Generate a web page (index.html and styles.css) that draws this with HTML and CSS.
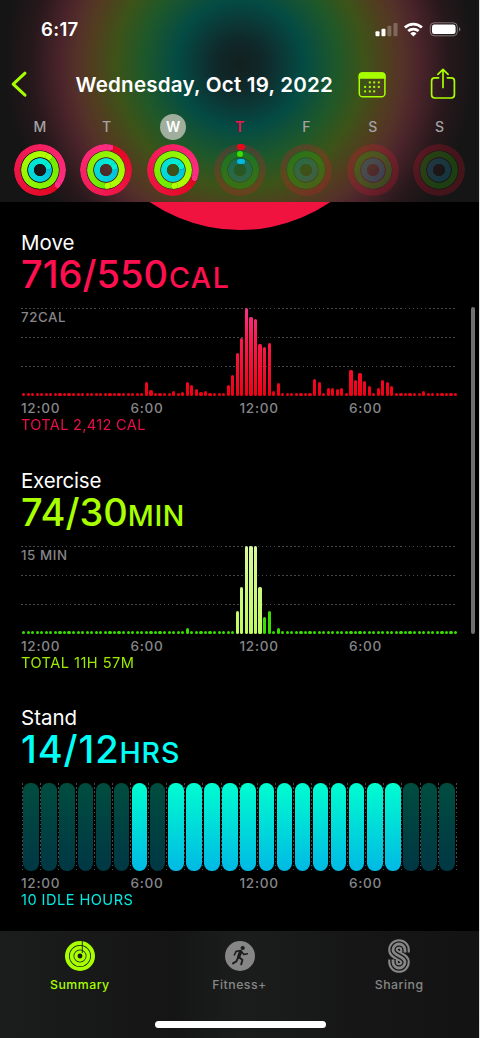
FILE: index.html
```html
<!DOCTYPE html>
<html lang="en">
<head>
  <meta charset="UTF-8">
  <meta name="viewport" content="width=device-width, initial-scale=1.0">
  <title>Activity</title>
  <link rel="stylesheet" href="styles.css">
</head>
<body>
<div class="phone">
  <header class="header">
    <!-- status bar -->
    <div class="status">
      <span class="time">6:17</span>
      <svg class="status-icons" width="88" height="18" viewBox="0 0 88 18">
        <g fill="#fff">
          <rect x="2.5" y="11.3" width="4" height="5" rx="1"/>
          <rect x="8.5" y="8.8" width="4" height="7.5" rx="1"/>
          <rect x="14.4" y="5.8" width="4" height="10.5" rx="1" opacity=".25"/>
          <rect x="20.5" y="3" width="4" height="13.3" rx="1" opacity=".25"/>
        </g>
        <g fill="none" stroke="#fff" stroke-width="2.7">
          <path d="M31.9 7.5a12.2 12.2 0 0 1 17 0"/>
          <path d="M35.2 11.1a7.6 7.6 0 0 1 10.4 0"/>
        </g>
        <path d="M37.3 13.4a4.6 4.6 0 0 1 6.2 0L40.4 16.5z" fill="#fff"/>
        <rect x="57.3" y="2.8" width="27" height="13" rx="4" fill="none" stroke="#fff" stroke-opacity=".4"/>
        <rect x="59" y="4.5" width="23.6" height="9.6" rx="2.4" fill="#fff"/>
        <path d="M86 7.2a2.4 2.4 0 0 1 0 4.3z" fill="#fff" opacity=".45"/>
      </svg>
    </div>

    <!-- title bar -->
    <div class="nav">
      <svg class="back" width="18" height="28" viewBox="0 0 18 28">
        <path d="M15 3.2L3.2 14.2l11.800 11" fill="none" stroke="#a8ff00" stroke-width="3" stroke-linecap="round" stroke-linejoin="round"/>
      </svg>
      <h1>Wednesday, Oct 19, 2022</h1>
      <svg class="cal" width="28" height="26" viewBox="0 0 28 26">
        <rect x="1.3" y="1" width="25.6" height="23.8" rx="3.4" fill="none" stroke="#a8ff00" stroke-width="1.5"/>
        <path d="M.6 6.8V4A3.6 3.6 0 0 1 4.2.3H24A3.6 3.6 0 0 1 27.6 4v2.8z" fill="#a8ff00"/>
        <g fill="#a8ff00">
          <rect x="10.8" y="9.4" width="2" height="2"/><rect x="15.2" y="9.4" width="2" height="2"/><rect x="19.8" y="9.4" width="2" height="2"/>
          <rect x="6.1" y="13.9" width="2" height="2"/><rect x="10.8" y="13.9" width="2" height="2"/><rect x="15.2" y="13.9" width="2" height="2"/><rect x="19.8" y="13.9" width="2" height="2"/>
          <rect x="6.1" y="18.4" width="2" height="2"/><rect x="10.8" y="18.4" width="2" height="2"/><rect x="15.2" y="18.4" width="2" height="2"/>
        </g>
      </svg>
      <svg class="share" width="26" height="32" viewBox="0 0 26 32">
        <g fill="none" stroke="#a8ff00" stroke-width="1.7" stroke-linecap="round" stroke-linejoin="round">
          <path d="M8.6 9.8H4.8A3.2 3.2 0 0 0 1.6 13v13.8A3.2 3.2 0 0 0 4.8 30h16.400a3.2 3.2 0 0 0 3.2-3.2V13a3.2 3.2 0 0 0-3.2-3.2h-3.800"/>
          <path d="M13 19.5V1.6M7.9 6.4L13 1.4l5.1 5"/>
        </g>
      </svg>
    </div>

    <!-- week -->
    <ul class="week"></ul>
  </header>

  <main class="content">
    <div class="big-ring"></div>

    <section class="move">
      <h2>Move</h2>
      <p class="value">716/550<small>CAL</small></p>
      <div class="chart lines" id="move"><span class="max">72CAL</span></div>
      <div class="axis"><span>12:00</span><span>6:00</span><span>12:00</span><span>6:00</span></div>
      <p class="total">TOTAL 2,412 CAL</p>
    </section>

    <section class="exercise">
      <h2>Exercise</h2>
      <p class="value">74/30<small>MIN</small></p>
      <div class="chart lines" id="exercise"><span class="max">15 MIN</span></div>
      <div class="axis"><span>12:00</span><span>6:00</span><span>12:00</span><span>6:00</span></div>
      <p class="total">TOTAL 11H 57M</p>
    </section>

    <section class="stand">
      <h2>Stand</h2>
      <p class="value">14/12<small>HRS</small></p>
      <div class="chart hours" id="stand"></div>
      <div class="axis"><span>12:00</span><span>6:00</span><span>12:00</span><span>6:00</span></div>
      <p class="total">10 IDLE HOURS</p>
    </section>

    <div class="scrollbar"></div>
  </main>

  <!-- tab bar -->
  <nav class="tabs">
    <a class="on">
      <svg width="30" height="34" viewBox="0 0 30 34">
        <g fill="none" stroke="#a8ff00">
          <circle cx="15" cy="17" r="13" stroke-width="4"/>
          <circle cx="15" cy="17" r="8.4" stroke-width="3.8"/>
          <circle cx="15" cy="17" r="4.1" stroke-width="3.3"/>
        </g>
        <path d="M17.3 2v12" stroke="#1b1c1c" stroke-width=".9"/>
      </svg>
      <span>Summary</span>
    </a>
    <a>
      <svg width="30" height="34" viewBox="0 0 30 34">
        <circle cx="15" cy="17" r="15" fill="#868686"/>
        <circle cx="17.7" cy="9" r="2.1" fill="#1b1c1c"/>
        <g fill="none" stroke="#1b1c1c" stroke-linecap="round" stroke-linejoin="round">
          <path d="M15.6 12.6l-2 5.6" stroke-width="3.4"/>
          <path d="M14.8 11.8l-3.7.6-1.7 3.6M16.8 13l2.1 2.6 3.4-.9" stroke-width="1.6"/>
          <path d="M14.2 18.4l3.2 2.4-1.2 4.6M13 18.6l-1.5 3.6-3.5 2.2" stroke-width="1.9"/>
        </g>
      </svg>
      <span>Fitness+</span>
    </a>
    <a>
      <svg width="24" height="34" viewBox="0 0 24 34">
        <g fill="none">
          <path d="M18 13.5V11a6 6 0 0 0-12 0C6 17 18 17 18 23a6 6 0 0 1-12 0v-2.500" stroke="#868686" stroke-width="9.600"/>
          <path d="M18 14V11a6 6 0 0 0-12 0C6 17 18 17 18 23a6 6 0 0 1-12 0v-3" stroke="#171717" stroke-width="5.400"/>
          <path d="M18 13.5V11a6 6 0 0 0-12 0C6 17 18 17 18 23a6 6 0 0 1-12 0v-2.500" stroke="#868686" stroke-width="2.800"/>
        </g>
      </svg>
      <span>Sharing</span>
    </a>
    <div class="home"></div>
  </nav>
</div>

<script>
  // week rings: angle where each ring ends (move, exercise, stand)
  const days = [
    { name: 'M', ends: [130, 34, 65] },
    { name: 'T', ends: [11, 175, 68] },
    { name: 'W', ends: [110, 175, 65], cls: 'selected' },
    { name: 'T', cls: 'today' },
    { name: 'F' },
    { name: 'S' },
    { name: 'S' }
  ];
  const kinds = ['r-move', 'r-exercise', 'r-stand'];

  document.querySelector('.week').innerHTML = days.map(day => {
    const rings = kinds.map((kind, i) => day.ends
      ? `<i class="ring ${kind}" style="--end:${day.ends[i]}deg"></i>`
      : `<i class="ring empty ${kind}"></i>`).join('');
    const start = day.cls === 'today' ? '<b class="s1"></b><b class="s2"></b><b class="s3"></b>' : '';
    return `<li class="${day.cls || ''}"><span>${day.name}</span><div class="rings">${rings}${start}</div></li>`;
  }).join('');

  // quarter hour bars, heights in px, 3 = nothing
  const bars = (id, values) => {
    const chart = document.getElementById(id);
    for (let i = 0; i < 96; i++) {
      const h = values[i] || 3;
      const bar = document.createElement('i');
      bar.style.height = h + 'px';
      if (id === 'exercise' && i >= 47 && i <= 52) bar.className = 'hot';
      chart.appendChild(bar);
    }
  };

  bars('move', {
    27: 14, 28: 6, 33: 5, 35: 4, 36: 14, 37: 11, 38: 7, 39: 4, 40: 5,
    45: 11, 46: 21, 47: 43, 48: 58, 49: 88, 50: 79, 51: 77, 52: 52, 53: 49, 54: 53, 55: 5, 56: 13,
    64: 17, 65: 14, 67: 8, 68: 8, 69: 7, 70: 8,
    72: 26, 73: 16, 74: 23, 75: 15, 76: 10, 78: 8, 79: 16, 80: 14, 81: 10, 88: 5
  });
  bars('exercise', { 36: 6, 47: 23, 48: 47, 49: 88, 50: 88, 51: 88, 52: 47, 53: 17, 54: 23, 56: 6 });

  // stand hours
  const stood = '000000101111111111111000';
  document.getElementById('stand').innerHTML =
    [...stood].map(h => `<i class="${h === '1' ? 'on' : ''}"></i>`).join('');
</script>
</body>
</html>
```
FILE: styles.css
```css
* {
  margin: 0;
  padding: 0;
  box-sizing: border-box;
}
ul, li {
  list-style: none;
}
svg {
  display: block;
}
body {
  background: #dedede;
  font-family: Inter, "Liberation Sans", sans-serif;
  color: #fff;
}
.phone {
  display: flex;
  flex-direction: column;
  width: 479px;
  height: 1038px;
  background: #000;
  overflow: hidden;
}

/* header */
.header {
  height: 202px;
  background: radial-gradient(circle at 240px 64px, #13201f 0, #10282a 24px, #044b44 64px, #1f5829 98px, #3d5318 124px, #523c20 150px, #54302a 165px, #4a242a 180px, #27181b 208px, #161516 234px);
}
.status {
  display: flex;
  justify-content: space-between;
  height: 60px;
  padding: 19px 18px 0 41px;
}
.time {
  font-size: 18.6px;
  font-weight: 600;
  line-height: 21px;
  letter-spacing: .3px;
}
.status-icons {
  margin-top: 1px;
}
.nav {
  display: flex;
  height: 52px;
  padding-left: 10px;
}
.back {
  margin-top: 10px;
}
.nav h1 {
  width: 283px;
  padding-left: 47.5px;
  font-size: 20.6px;
  font-weight: 600;
  line-height: 49px;
  letter-spacing: .2px;
  white-space: nowrap;
}
.cal {
  margin: 12px 0 0 47px;
}
.share {
  margin: 8px 0 0 44px;
}

/* week */
.week {
  display: flex;
  padding-left: 6.6px;
}
.week li {
  display: flex;
  flex-direction: column;
  align-items: center;
  width: 66.6px;
}
.week span {
  width: 26px;
  height: 26px;
  margin-top: 2px;
  border-radius: 50%;
  color: #a3a3a5;
  font-size: 14px;
  font-weight: 500;
  line-height: 26px;
  text-align: center;
}
.week .selected span {
  background: #9fae9d;
  color: #fff;
  font-weight: 600;
}
.week .today span {
  color: #f0144a;
  font-weight: 600;
}
.rings {
  position: relative;
  width: 52px;
  height: 52px;
  margin-top: 4px;
}
.ring {
  position: absolute;
  inset: var(--inset);
  border-radius: 50%;
  background: conic-gradient(from var(--end), var(--from), var(--to));
  -webkit-mask: radial-gradient(closest-side, transparent var(--hole), #000 calc(var(--hole) + .7px));
  mask: radial-gradient(closest-side, transparent var(--hole), #000 calc(var(--hole) + .7px));
}
/* rounded end of the ring */
.ring::before {
  content: "";
  position: absolute;
  inset: 0;
  transform: rotate(var(--end));
  background: radial-gradient(circle at 50% 3px, var(--to) 2.8px, rgba(0, 0, 0, .15) 3.2px, transparent 4px);
}
.r-move {
  --inset: 0;
  --hole: 19.2px;
  --from: #e2061d;
  --to: #ff2d84;
}
.r-exercise {
  --inset: 7px;
  --hole: 12.4px;
  --from: #6bea00;
  --to: #b4ff00;
}
.r-stand {
  --inset: 14px;
  --hole: 5.8px;
  --from: #00bfe0;
  --to: #00f2d2;
}
.ring.empty {
  background: var(--to);
  opacity: .2;
}
.ring.empty::before {
  display: none;
}
.r-move.empty {
  --to: #fa1130;
}
.r-exercise.empty {
  --to: #38e000;
}
.r-stand.empty {
  --to: #1ab4dc;
}
.rings b {
  position: absolute;
  left: 23px;
  width: 8px;
  height: 5.6px;
  border-radius: 3px;
}
.s1 {
  top: .3px;
  background: #e8081c;
}
.rings .s2 {
  top: 7.3px;
  width: 6px;
  background: #38e000;
}
.s3 {
  top: 14.5px;
  background: #00b9e4;
}

/* content */
.content {
  position: relative;
  height: 729px;
  padding: 30px 0 0 21px;
  overflow: hidden;
}
.big-ring {
  position: absolute;
  left: 80px;
  top: -292px;
  width: 320px;
  height: 320px;
  border-radius: 50%;
  background: #f0123f;
}
section {
  height: 237.7px;
}
.move {
  --main: #ff0f50;
}
.exercise {
  --main: #a8ff00;
}
.stand {
  --main: #00fff6;
}
h2 {
  font-size: 20.5px;
  font-weight: 400;
  line-height: 22px;
}
.exercise h2 {
  letter-spacing: -.2px;
}
.value {
  height: 39px;
  color: var(--main);
  font-size: 38px;
  font-weight: 500;
  line-height: 40px;
}
.value small {
  font-size: 28.5px;
  font-weight: 500;
  line-height: 0;
}
.move small {
  margin-left: 1px;
  letter-spacing: 1.6px;
}
.exercise small {
  letter-spacing: .6px;
}
.stand .value {
  letter-spacing: .9px;
}
.chart {
  position: relative;
  display: flex;
  align-items: flex-end;
  width: 436.5px;
  height: 88px;
  margin-top: 15px;
}
.lines {
  justify-content: space-between;
  padding-left: 1px;
}
/* dotted grid */
.lines::before {
  content: "";
  position: absolute;
  inset: 0 0 1px;
  background: repeating-linear-gradient(#48484a 0 1px, transparent 1px 29px);
  -webkit-mask: repeating-linear-gradient(90deg, #000 0 1.5px, transparent 1.5px 4.08px);
  mask: repeating-linear-gradient(90deg, #000 0 1.5px, transparent 1.5px 4.08px);
}
.lines i {
  position: relative;
  width: 3.2px;
  border-radius: 1.5px;
  background: linear-gradient(to top, #f00012, #fb1a4c 55px, #fc308c 88px);
}
#exercise i {
  background: #38e000;
}
#exercise .hot {
  background: linear-gradient(to top, #c0fa60, #d8f99c 88px);
}
.max {
  position: absolute;
  left: 0;
  top: 1px;
  color: #868689;
  font-size: 13.3px;
  font-weight: 500;
  line-height: 17px;
  letter-spacing: .6px;
}
.hours {
  gap: 2.6px;
  padding-left: 2.3px;
}
.hours i {
  position: relative;
  width: 15.5px;
  height: 88px;
  border-radius: 7.5px;
  background: linear-gradient(#004d3f, #003744);
}
.hours .on {
  background: linear-gradient(#00fdd0, #00b9e4);
}
.hours i::before,
.hours i:last-child::after {
  content: "";
  position: absolute;
  left: -1.8px;
  top: 0;
  width: 1px;
  height: 88px;
  background: repeating-linear-gradient(#4a4a4c 0 1.5px, transparent 1.5px 4.08px);
}
.hours i:last-child::after {
  left: 16.3px;
}
.axis {
  display: grid;
  grid-template-columns: 109.5px 109px 109.5px auto;
  height: 18px;
  margin-top: 3px;
  color: #868689;
  font-size: 13.6px;
  font-weight: 500;
  line-height: 18px;
  letter-spacing: .7px;
}
.total {
  color: var(--main);
  font-size: 14.6px;
  line-height: 17px;
  letter-spacing: .3px;
  opacity: .92;
}
.exercise .total,
.stand .total {
  letter-spacing: .45px;
}
.scrollbar {
  position: absolute;
  left: 471px;
  top: 105px;
  width: 4px;
  height: 327px;
  border-radius: 2px;
  background: #707070;
}

/* tab bar */
.tabs {
  position: relative;
  display: flex;
  height: 107px;
  padding-top: 8px;
  background: linear-gradient(90deg, #1b1c1c, #151515 36%, #1b1d1d 50%, #161616 75%, #131313);
}
.tabs a {
  display: flex;
  flex: 1;
  flex-direction: column;
  align-items: center;
  color: #868686;
  font-size: 12.3px;
  font-weight: 500;
  line-height: 16px;
  letter-spacing: .5px;
}
.tabs span {
  margin-top: 4px;
}
.tabs .on {
  color: #a8ff00;
}
.home {
  position: absolute;
  left: 154.5px;
  bottom: 10.5px;
  width: 171px;
  height: 6.5px;
  border-radius: 4px;
  background: #fff;
}
```
